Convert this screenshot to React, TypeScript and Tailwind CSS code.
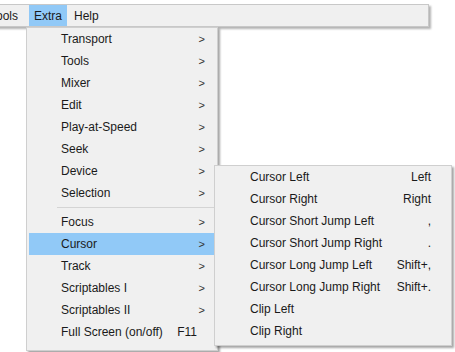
import React from "react";

const font = { fontFamily: '"Liberation Sans", Arial, sans-serif' };

const mainItems: { label: string; arrow?: boolean; sc?: string; active?: boolean; sep?: boolean }[] = [
  { label: "Transport", arrow: true },
  { label: "Tools", arrow: true },
  { label: "Mixer", arrow: true },
  { label: "Edit", arrow: true },
  { label: "Play-at-Speed", arrow: true },
  { label: "Seek", arrow: true },
  { label: "Device", arrow: true },
  { label: "Selection", arrow: true },
  { label: "", sep: true },
  { label: "Focus", arrow: true },
  { label: "Cursor", arrow: true, active: true },
  { label: "Track", arrow: true },
  { label: "Scriptables I", arrow: true },
  { label: "Scriptables II", arrow: true },
  { label: "Full Screen (on/off)", sc: "F11" },
];

const subItems: [string, string][] = [
  ["Cursor Left", "Left"],
  ["Cursor Right", "Right"],
  ["Cursor Short Jump Left", ","],
  ["Cursor Short Jump Right", "."],
  ["Cursor Long Jump Left", "Shift+,"],
  ["Cursor Long Jump Right", "Shift+."],
  ["Clip Left", ""],
  ["Clip Right", ""],
];

export default function App() {
  return (
    <div
      className="relative w-[455px] h-[352px] bg-white overflow-hidden text-[12px] text-[#1a1a1a]"
      style={font}
    >
      {/* Menu bar */}
      <div className="mt-[4px] ml-[-20px] w-[449px] h-[23px] border border-[#c8c8c8] bg-[#f0f0f0] shadow-[2px_2px_2px_rgba(0,0,0,0.3)] flex items-center">
        <div className="h-full flex items-center pl-[9px] pr-[11px]">Tools</div>
        <div className="h-full flex items-center px-[5px] bg-[#91c9f7]">Extra</div>
        <div className="h-full flex items-center px-[7px]">Help</div>
      </div>

      {/* Dropdown */}
      <div className="absolute left-[26px] top-[27px] w-[192px] h-[324px] border border-[#cfcfcf] bg-[#f0f0f0] shadow-[2px_2px_2px_rgba(0,0,0,0.35)] flex flex-col pl-[2px] pr-[3px]">
        {mainItems.map((it, i) =>
          it.sep ? (
            <div key={i} className="h-[7px] flex items-center pl-[28px]">
              <div className="h-px w-full bg-[#d4d4d4]" />
            </div>
          ) : (
            <div
              key={i}
              className={
                "h-[22px] shrink-0 flex items-center justify-between pl-[32px] " +
                (it.sc ? "pr-[17px] " : "pr-[9px] ") +
                (it.active ? "bg-[#91c9f7]" : "")
              }
            >
              <span>{it.label}</span>
              {it.arrow && <span className="text-[#333] text-[11px]">&gt;</span>}
              {it.sc && <span>{it.sc}</span>}
            </div>
          )
        )}
      </div>

      {/* Submenu */}
      <div className="absolute left-[214px] top-[165px] w-[238px] h-[181px] border border-[#cfcfcf] bg-[#f0f0f0] shadow-[2px_2px_2px_rgba(0,0,0,0.35)] flex flex-col">
        {subItems.map(([l, s], i) => (
          <div key={i} className="h-[22px] shrink-0 flex items-center justify-between pl-[35px] pr-[20px]">
            <span>{l}</span>
            <span>{s}</span>
          </div>
        ))}
      </div>
    </div>
  );
}
